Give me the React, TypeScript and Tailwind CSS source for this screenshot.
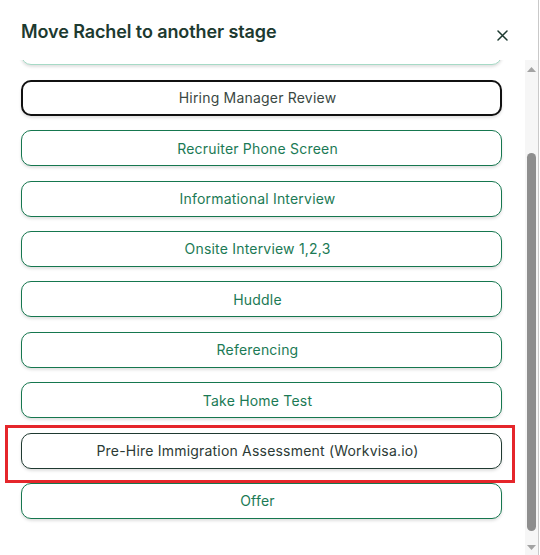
import { useLayoutEffect, useRef } from 'react';

type Stage = { name: string; tone?: 'faded' | 'current' | 'dark' };

const stages: Stage[] = [
  { name: 'New Applicant' },
  { name: 'Application Review', tone: 'faded' },
  { name: 'Hiring Manager Review', tone: 'current' },
  { name: 'Recruiter Phone Screen' },
  { name: 'Informational Interview' },
  { name: 'Onsite Interview 1,2,3' },
  { name: 'Huddle' },
  { name: 'Referencing' },
  { name: 'Take Home Test' },
  { name: 'Pre-Hire Immigration Assessment (Workvisa.io)', tone: 'dark' },
  { name: 'Offer' },
];

export default function App() {
  const listRef = useRef<HTMLDivElement>(null);

  // the list is shown scrolled part way down
  useLayoutEffect(() => {
    if (listRef.current) listRef.current.scrollTop = 100;
  }, []);

  return (
    <div className="w-[540px] h-[555px] bg-white flex font-['Inter','Liberation_Sans',sans-serif]">
      <div className="w-[538px] flex flex-col">
        <div className="h-[60px] shrink-0 flex items-start justify-between pl-[21px] pr-[30px] pt-[20px]">
          <h2 className="text-[18px] leading-[24px] font-semibold text-[#1d3a30] tracking-[-0.1px]">
            Move Rachel to another stage
          </h2>
          <button className="mt-[10px] text-[#1d3a30]">
            <svg width="11" height="11" viewBox="0 0 11 11" fill="none" stroke="currentColor" strokeWidth="1.5" strokeLinecap="round">
              <path d="M1 1l9 9M10 1l-9 9" />
            </svg>
          </button>
        </div>

        <div className="flex-1 min-h-0 flex">
          <div ref={listRef} className="flex-1 overflow-hidden">
            <div className="flex flex-col gap-[14.4px] pl-[21px] pr-[23px] pt-[19px] pb-[44px]">
              {stages.map((s) => (
                <div key={s.name} className="relative">
                  <button
                    className={`w-full h-[36px] pr-[8px] rounded-[10px] bg-white text-[14px] tracking-[0.2px] shadow-[0_2px_3px_rgba(0,0,0,0.12)] ${
                      s.tone === 'current'
                        ? 'border-2 border-[#111111] text-[#3a4843]'
                        : s.tone === 'dark'
                        ? 'border border-[#1f3a31] text-[#2c3a35]'
                        : s.tone === 'faded'
                        ? 'border border-[#a6dac6] text-[#1b7a55]'
                        : 'border border-[#16774f] text-[#1b7a55]'
                    }`}
                  >
                    {s.name}
                  </button>
                  {s.tone === 'dark' && (
                    <div className="absolute -left-[16px] -right-[13px] -top-[8px] -bottom-[14px] border-[3px] border-[#e5262b] pointer-events-none" />
                  )}
                </div>
              ))}
            </div>
          </div>

          {/* scrollbar */}
          <div className="w-[13px] bg-[#f6f6f6] flex flex-col items-center">
            <svg className="mt-[7px] shrink-0" width="9" height="5" viewBox="0 0 9 5">
              <path d="M4.5 0L9 5H0z" fill="#a3a3a3" />
            </svg>
            <div className="flex-1 w-full flex flex-col items-center pt-[81px] pb-[14px]">
              <div className="w-[9px] flex-1 rounded-full bg-[#8e8e8e]" />
            </div>
            <svg className="mb-[5px] shrink-0" width="9" height="5" viewBox="0 0 9 5">
              <path d="M0 0H9L4.5 5z" fill="#a3a3a3" />
            </svg>
          </div>
        </div>
      </div>
      <div className="w-[1px] bg-[#c9c9c9]" />
      <div className="w-[1px] bg-white" />
    </div>
  );
}
